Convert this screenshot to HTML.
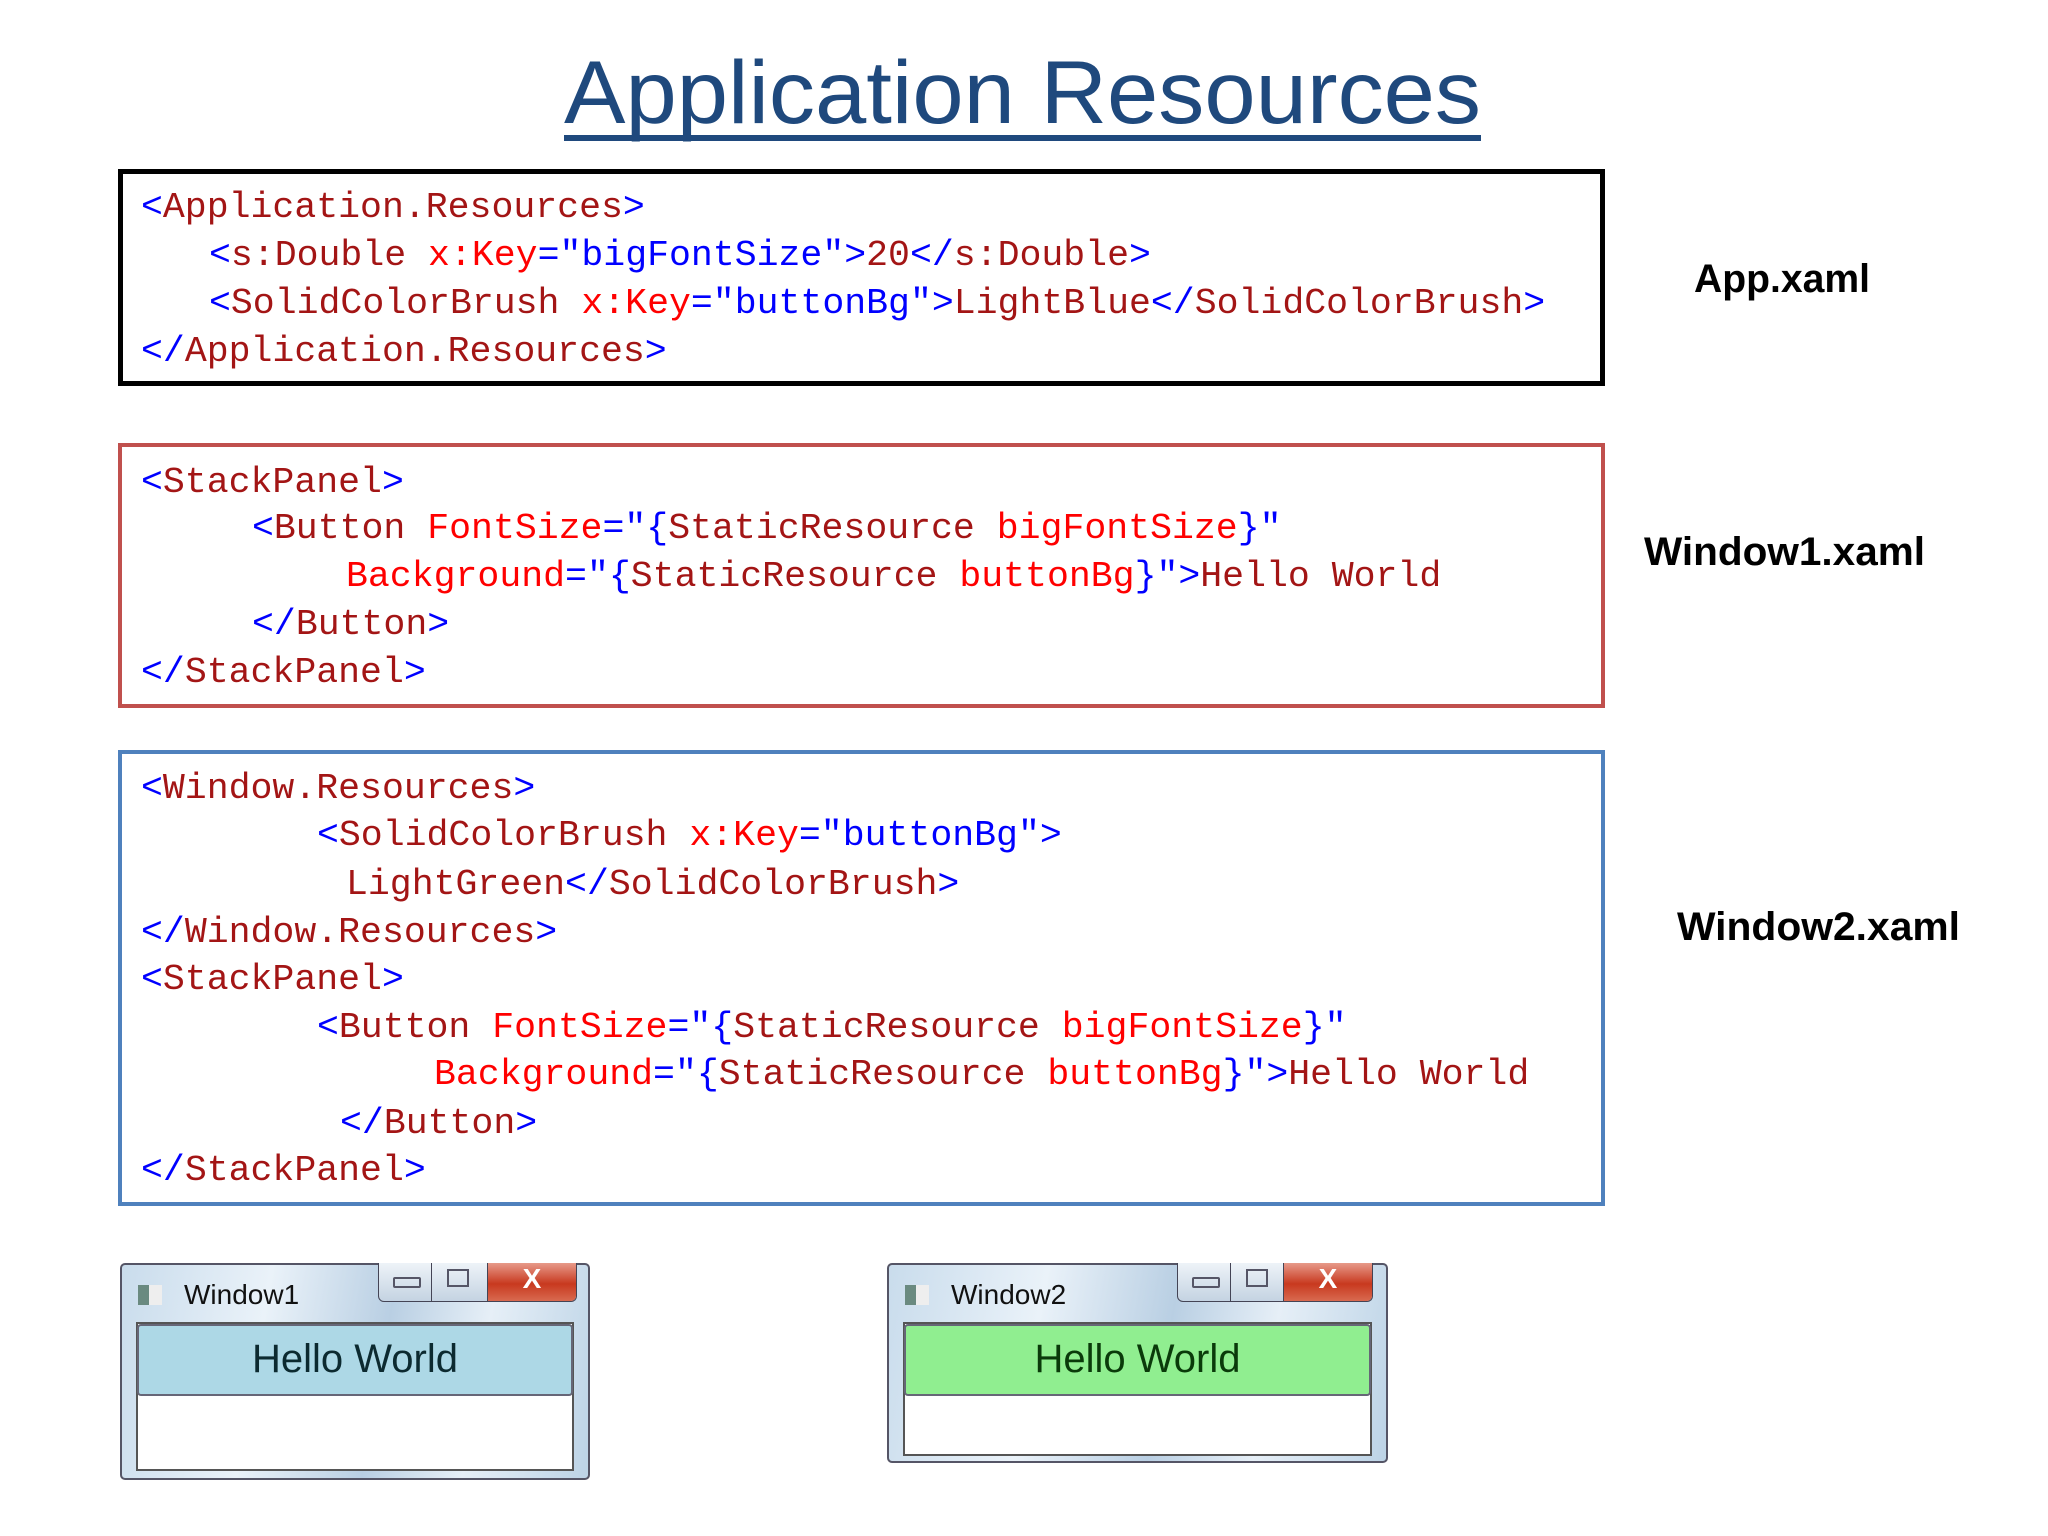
<!DOCTYPE html>
<html><head><meta charset="utf-8"><style>
body{margin:0;width:2048px;height:1536px;background:#fff;position:relative;overflow:hidden;font-family:"Liberation Sans",sans-serif}
.box{position:absolute;left:118px;width:1487px;box-sizing:border-box}
.l{position:absolute;font-family:"Liberation Mono",monospace;font-size:36.5px;line-height:48px;white-space:pre;color:#a31515;margin-top:3px}
.b{color:#0000ff}.r{color:#ff0000}.d{color:#a31515}
.win{position:absolute;top:1263px;height:217px;border:2px solid #556;border-radius:5px;box-sizing:border-box;background:linear-gradient(100deg,#c9dcec,#eaf2f9 30%,#b9cfe3 55%,#e6eff7 75%,#bcd3e6)}
.wt{position:absolute;left:22px;top:14px;font-size:28px;color:#111}
.ic{position:absolute;left:0;top:20px;width:24px;height:20px;background:linear-gradient(90deg,#6a8a80 45%,#eee 45%)}
.ctl{position:absolute;top:-2px;height:38px;border:1px solid #445;border-top:none;border-radius:0 0 6px 6px;background:linear-gradient(#eef3f8,#c4d3e2);overflow:hidden}
.cls{position:absolute;right:0;top:0;bottom:0;background:linear-gradient(#e79a8a,#c8391f 55%,#d86a50);border-left:1px solid #445;color:#fff;font-weight:bold;font-size:28px;text-align:center;line-height:32px}
.cont{position:absolute;left:14px;right:14px;top:57px;background:#fff;border:2px solid #555}
.btn{position:absolute;left:-1px;right:-1px;top:0;height:68px;border:2px solid #667;border-radius:4px;font-size:40px;text-align:center;line-height:66px;color:#0c2a30}
</style></head><body>
<svg style="position:absolute;left:0;top:0" width="2048" height="400">
<text x="564" y="123" font-family="Liberation Sans" font-size="89" fill="#1f497d" textLength="917" lengthAdjust="spacingAndGlyphs">Application Resources</text>
<rect x="564" y="135" width="917" height="6" fill="#1f497d"/>
</svg>
<svg style="position:absolute;left:0;top:0" width="2048" height="1000">
<text x="1694" y="292" font-family="Liberation Sans" font-weight="bold" font-size="40" textLength="176" lengthAdjust="spacingAndGlyphs">App.xaml</text>
<text x="1644" y="565" font-family="Liberation Sans" font-weight="bold" font-size="40" textLength="281" lengthAdjust="spacingAndGlyphs">Window1.xaml</text>
<text x="1677" y="940" font-family="Liberation Sans" font-weight="bold" font-size="40" textLength="283" lengthAdjust="spacingAndGlyphs">Window2.xaml</text>
</svg>
<div class="box" style="top:169px;height:217px;border:5px solid #000"></div>
<div class="box" style="top:443px;height:265px;border:4px solid #c0504d"></div>
<div class="box" style="top:750px;height:456px;border:4px solid #4f81bd"></div>

<div class="l" style="left:141px;top:181px"><span class="b">&lt;</span>Application.Resources<span class="b">&gt;</span></div>
<div class="l" style="left:209px;top:229px"><span class="b">&lt;</span>s:Double <span class="r">x:Key</span><span class="b">="bigFontSize"&gt;</span>20<span class="b">&lt;/</span>s:Double<span class="b">&gt;</span></div>
<div class="l" style="left:209px;top:277px"><span class="b">&lt;</span>SolidColorBrush <span class="r">x:Key</span><span class="b">="buttonBg"&gt;</span>LightBlue<span class="b">&lt;/</span>SolidColorBrush<span class="b">&gt;</span></div>
<div class="l" style="left:141px;top:325px"><span class="b">&lt;/</span>Application.Resources<span class="b">&gt;</span></div>

<div class="l" style="left:141px;top:456px"><span class="b">&lt;</span>StackPanel<span class="b">&gt;</span></div>
<div class="l" style="left:252px;top:502px"><span class="b">&lt;</span>Button <span class="r">FontSize</span><span class="b">="{</span>StaticResource <span class="r">bigFontSize</span><span class="b">}"</span></div>
<div class="l" style="left:346px;top:550px"><span class="r">Background</span><span class="b">="{</span>StaticResource <span class="r">buttonBg</span><span class="b">}"&gt;</span>Hello World</div>
<div class="l" style="left:252px;top:598px"><span class="b">&lt;/</span>Button<span class="b">&gt;</span></div>
<div class="l" style="left:141px;top:646px"><span class="b">&lt;/</span>StackPanel<span class="b">&gt;</span></div>

<div class="l" style="left:141px;top:762px"><span class="b">&lt;</span>Window.Resources<span class="b">&gt;</span></div>
<div class="l" style="left:317px;top:809px"><span class="b">&lt;</span>SolidColorBrush <span class="r">x:Key</span><span class="b">="buttonBg"&gt;</span></div>
<div class="l" style="left:346px;top:858px">LightGreen<span class="b">&lt;/</span>SolidColorBrush<span class="b">&gt;</span></div>
<div class="l" style="left:141px;top:906px"><span class="b">&lt;/</span>Window.Resources<span class="b">&gt;</span></div>
<div class="l" style="left:141px;top:953px"><span class="b">&lt;</span>StackPanel<span class="b">&gt;</span></div>
<div class="l" style="left:317px;top:1001px"><span class="b">&lt;</span>Button <span class="r">FontSize</span><span class="b">="{</span>StaticResource <span class="r">bigFontSize</span><span class="b">}"</span></div>
<div class="l" style="left:434px;top:1048px"><span class="r">Background</span><span class="b">="{</span>StaticResource <span class="r">buttonBg</span><span class="b">}"&gt;</span>Hello World</div>
<div class="l" style="left:340px;top:1097px"><span class="b">&lt;/</span>Button<span class="b">&gt;</span></div>
<div class="l" style="left:141px;top:1144px"><span class="b">&lt;/</span>StackPanel<span class="b">&gt;</span></div>

<div class="win" style="left:120px;width:470px">
 <div class="ic" style="left:16px"></div>
 <div class="wt" style="left:62px">Window1</div>
 <div class="ctl" style="left:256px;width:197px">
  <div style="position:absolute;left:14px;top:14px;width:24px;height:7px;border:2px solid #556;border-radius:2px"></div>
  <div style="position:absolute;left:52px;top:0;bottom:0;border-left:1px solid #445"></div>
  <div style="position:absolute;left:68px;top:6px;width:18px;height:14px;border:2px solid #556"></div>
  <div class="cls" style="width:88px">X</div>
 </div>
 <div class="cont" style="top:57px;height:145px">
  <div class="btn" style="background:#add8e6">Hello World</div>
 </div>
</div>

<div class="win" style="left:887px;width:501px;height:200px">
 <div class="ic" style="left:16px"></div>
 <div class="wt" style="left:62px">Window2</div>
 <div class="ctl" style="left:288px;width:194px">
  <div style="position:absolute;left:14px;top:14px;width:24px;height:7px;border:2px solid #556;border-radius:2px"></div>
  <div style="position:absolute;left:52px;top:0;bottom:0;border-left:1px solid #445"></div>
  <div style="position:absolute;left:68px;top:6px;width:18px;height:14px;border:2px solid #556"></div>
  <div class="cls" style="width:88px">X</div>
 </div>
 <div class="cont" style="top:57px;height:130px">
  <div class="btn" style="background:#90ee90;color:#0a3a0a">Hello World</div>
 </div>
</div>
</body></html>
